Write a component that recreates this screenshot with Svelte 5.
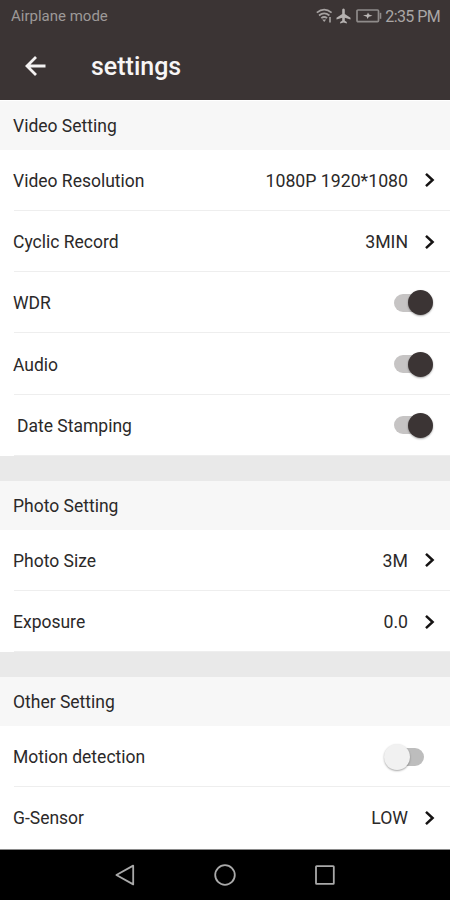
<script>
    let groups = $state([
        {
            title: 'Video Setting',
            items: [
                { label: 'Video Resolution', value: '1080P 1920*1080' },
                { label: 'Cyclic Record', value: '3MIN' },
                { label: 'WDR', on: true },
                { label: 'Audio', on: true },
                { label: 'Date Stamping', on: true, indent: true },
            ],
        },
        {
            title: 'Photo Setting',
            items: [
                { label: 'Photo Size', value: '3M' },
                { label: 'Exposure', value: '0.0' },
            ],
        },
        {
            title: 'Other Setting',
            items: [
                { label: 'Motion detection', on: false },
                { label: 'G-Sensor', value: 'LOW' },
            ],
        },
    ]);
</script>

<div class="phone">
    <header>
        <div class="status">
            <span class="carrier">Airplane mode</span>
            <svg class="wifi" width="17" height="16" viewBox="0 0 17 16">
                <g fill="none" stroke="#a6a2a1" stroke-width="1.7">
                    <path d="M0.8 4.6Q8.2 -1.4 15.6 4.6" />
                    <path d="M3 7.5Q8.2 3.2 13.4 7.5" />
                    <path d="M5.3 10.2Q8.2 7.8 11.1 10.2" />
                </g>
                <path d="M6.2 11.6h4L8.2 14zM13.2 9h1.6v5.5h-1.6z" fill="#a6a2a1" />
            </svg>
            <svg class="plane" width="15" height="16" viewBox="0 0 15 16">
                <path d="M7.5 0.5c.9 0 1.3.8 1.3 1.7v3.9l5.7 3.7v1.7L8.8 9.7v3l2 1.4v1.4l-3.3-.9-3.3.9v-1.4l2-1.4v-3L.5 11.5V9.8l5.7-3.7V2.2c0-.9.4-1.7 1.3-1.7z" fill="#b5b1b0" />
            </svg>
            <svg class="battery" width="26" height="14" viewBox="0 0 26 14">
                <rect x="1" y="1" width="21.5" height="11.6" rx="1" fill="none" stroke="#8f8b8a" stroke-width="1.7" />
                <path d="M23.7 3.8h1.6v6h-1.6z" fill="#8f8b8a" />
                <path d="M7 6.2L11 5.8 12 3.5 13 5.6 16.5 6.8 12.8 7.8 11.5 10 10.7 7.8z" fill="#bbb7b6" />
            </svg>
            <span class="time">2:35 PM</span>
        </div>
        <div class="titlebar">
            <svg class="back" width="22" height="22" viewBox="0 0 22 22">
                <path d="M20.5 11H2.5M11 2L2 11l9 9" fill="none" stroke="#f4f2f2" stroke-width="2.8" />
            </svg>
            <h1>settings</h1>
        </div>
    </header>

    <main>
        {#each groups as group (group.title)}
            <section>
                <h2>{group.title}</h2>
                {#each group.items as item (item.label)}
                    <div class="row">
                        <span class="label" class:indent={item.indent}>{item.label}</span>
                        {#if item.value}
                            <span class="value">{item.value}</span>
                            <svg class="chevron" width="12" height="16" viewBox="0 0 12 16">
                                <path d="M2 1.8L8.6 8 2 14.2" fill="none" stroke="#151313" stroke-width="2.5" />
                            </svg>
                        {:else}
                            <button
                                class="switch"
                                class:on={item.on}
                                aria-label={item.label}
                                onclick={() => (item.on = !item.on)}
                            >
                                <span class="knob"></span>
                            </button>
                        {/if}
                    </div>
                {/each}
            </section>
        {/each}
    </main>

    <nav>
        <svg width="24" height="24" viewBox="0 0 24 24">
            <path d="M20.2 2.6v18.8L3.4 12z" />
        </svg>
        <svg width="24" height="24" viewBox="0 0 24 24">
            <circle cx="12" cy="12" r="9.8" />
        </svg>
        <svg width="24" height="24" viewBox="0 0 24 24">
            <rect x="3" y="3.2" width="17.8" height="17.6" rx="0.6" />
        </svg>
    </nav>
</div>

<style>
    :global(body) {
        background: #fff;
    }

    .phone {
        display: flex;
        flex-direction: column;
        width: 450px;
        height: 900px;
        overflow: hidden;
        font-family: Roboto, "Liberation Sans", sans-serif;
        color: #2b2929;
    }

    header {
        flex: none;
        height: 100px;
        background: #3b3434;
    }

    .status {
        display: flex;
        align-items: center;
        height: 32px;
        padding: 0 10px 0 11px;
        font-size: 15px;
        color: #9d9998;
    }

    .carrier {
        margin-right: auto;
    }

    .plane {
        margin-left: 3px;
    }

    .battery {
        margin: 0 3px 0 5px;
    }

    .time {
        font-size: 16px;
        letter-spacing: -0.6px;
        color: #aaa6a5;
    }

    .titlebar {
        display: flex;
        align-items: center;
        height: 68px;
        padding-left: 25px;
    }

    h1 {
        margin: 0 0 0 44px;
        font-size: 25px;
        font-weight: 500;
        color: #f7f5f5;
    }

    main {
        flex: 1;
        border-top: 1px solid #fff;
        border-bottom: 1px solid #8a8a8a;
        box-sizing: border-box;
        overflow: hidden;
    }

    section + section {
        border-top: 25px solid #e9e9e9;
    }

    h2 {
        display: flex;
        align-items: center;
        box-sizing: border-box;
        height: 48.6px;
        margin: 0;
        padding: 1px 0 0 13px;
        font-size: 17.5px;
        font-weight: 400;
        background: #f7f7f7;
    }

    .row {
        display: flex;
        align-items: center;
        height: 61.3px;
        padding: 0 14px 0 13px;
        background: linear-gradient(#eee, #eee) 14px 100% / 100% 1px no-repeat;
    }

    section:last-child .row:last-child {
        background: none;
    }

    .label,
    .value {
        padding-top: 1px;
        font-size: 17.5px;
    }

    .label {
        margin-right: auto;
    }

    .indent {
        padding-left: 4px;
    }

    .value {
        margin-right: 16px;
        font-size: 17.7px;
    }

    .switch {
        display: flex;
        align-items: center;
        width: 54px;
        height: 30px;
        margin-right: 3px;
        padding: 0;
        border: 0;
        background: none;
    }

    .switch::before {
        content: "";
        width: 30px;
        height: 18px;
        margin-left: 15px;
        border-radius: 9px;
        background: #bdbdbd;
    }

    .knob {
        width: 26px;
        height: 26px;
        margin-left: -40px;
        border-radius: 50%;
        background: #f1f1f1;
        box-shadow: 0 1px 2px rgba(0, 0, 0, 0.35);
    }

    .on::before {
        background: #c6c4c4;
    }

    .on .knob {
        width: 25px;
        height: 25px;
        margin-left: -16px;
        background: #3b3434;
    }

    nav {
        flex: none;
        display: flex;
        align-items: center;
        justify-content: center;
        gap: 76px;
        height: 50px;
        background: #000;
    }

    nav svg {
        fill: none;
        stroke: #a9a9a9;
        stroke-width: 1.8;
        stroke-linejoin: round;
    }
</style>
